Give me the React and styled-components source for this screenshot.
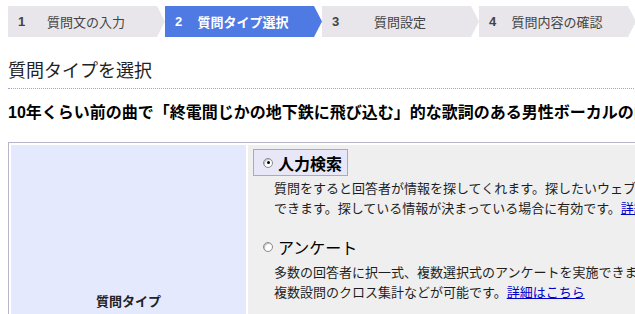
import React from 'react';
import styled, { createGlobalStyle } from 'styled-components';

const GlobalStyle = createGlobalStyle`
  html, body {
    margin: 0;
    padding: 0;
    background: #ffffff;
    overflow: hidden;
  }
  body {
    font-family: "Liberation Sans", "Noto Sans CJK JP", sans-serif;
    color: #222222;
  }
`;

const Page = styled.div`
  width: 1000px;
  padding: 6px 8px 0;
`;

const Steps = styled.ol`
  list-style: none;
  margin: 0;
  padding: 0;
  display: flex;
`;

const Step = styled.li`
  width: 157px;
  height: 31px;
  box-sizing: border-box;
  padding: 0 19px 0 10px;
  display: flex;
  align-items: center;
  font-size: 13px;
  background: ${({ active }) => (active ? '#4f79e3' : '#e8e6ea')};
  color: ${({ active }) => (active ? '#ffffff' : '#444444')};
  clip-path: polygon(0 0, 149px 0, 100% 50%, 149px 100%, 0 100%);
`;

const StepNum = styled.span`
  width: 8px;
  font-weight: bold;
`;

const StepLabel = styled.span`
  flex: 1;
  text-align: center;
  font-weight: ${({ active }) => (active ? 'bold' : 'normal')};
  white-space: nowrap;
`;

const Heading = styled.h2`
  margin: 22px 0 0;
  padding-bottom: 5px;
  font-size: 18px;
  line-height: 24px;
  font-weight: normal;
  color: #222222;
  border-bottom: 1px dotted #a4a4d8;
`;

const Question = styled.h3`
  margin: 13px 0 0;
  font-size: 16px;
  line-height: 22px;
  font-weight: bold;
  color: #000000;
  white-space: nowrap;
`;

const Table = styled.table`
  margin-top: 18px;
  border: 1px solid #b8b4cc;
  border-spacing: 2px;
  width: 1000px;
`;

const HeadCell = styled.th`
  width: 235px;
  height: 310px;
  padding: 0;
  background: #e5e9fd;
  font-size: 13px;
  font-weight: bold;
  color: #222222;
  text-align: center;
  vertical-align: middle;
`;

const BodyCell = styled.td`
  padding: 4px 5px;
  background: #efefef;
  vertical-align: top;
`;

const Option = styled.div`
  margin-bottom: 14px;
`;

const OptionLabel = styled.label`
  display: inline-flex;
  align-items: center;
  height: 27px;
  box-sizing: border-box;
  padding: 0 5px 0 9px;
  border: 1px solid ${({ checked }) => (checked ? '#a8a8cc' : 'transparent')};
  background: ${({ checked }) => (checked ? '#e7e7f8' : 'transparent')};
  font-size: 16px;
  font-weight: ${({ checked }) => (checked ? 'bold' : 'normal')};
  color: #000000;
`;

const Radio = styled.span`
  position: relative;
  width: 10px;
  height: 10px;
  box-sizing: border-box;
  margin-right: 5px;
  border-radius: 50%;
  border: 1px solid #8a8a8a;
  background: #ffffff;
  box-shadow: inset 1px 1px 1px #bdbdbd;

  &::after {
    content: '';
    position: absolute;
    left: 2.5px;
    top: 2.5px;
    width: 3px;
    height: 3px;
    border-radius: 50%;
    background: ${({ checked }) => (checked ? '#000000' : 'transparent')};
  }
`;

const Desc = styled.p`
  margin: 3px 0 0 21px;
  font-size: 13px;
  line-height: 20px;
  color: #1e1e1e;
  white-space: nowrap;
`;

const More = styled.a`
  color: #0000cc;
  text-decoration: underline;
`;

const steps = [
  { num: '1', label: '質問文の入力' },
  { num: '2', label: '質問タイプ選択', active: true },
  { num: '3', label: '質問設定' },
  { num: '4', label: '質問内容の確認' },
];

const options = [
  {
    label: '人力検索',
    checked: true,
    lines: [
      '質問をすると回答者が情報を探してくれます。探したいウェブサイトや商品、お店などの情報を得ることが',
      'できます。探している情報が決まっている場合に有効です。',
    ],
  },
  {
    label: 'アンケート',
    lines: [
      '多数の回答者に択一式、複数選択式のアンケートを実施できます。択一式、複数選択式の',
      '複数設問のクロス集計などが可能です。',
    ],
  },
];

export default function App() {
  return (
    <>
      <GlobalStyle />
      <Page>
        <Steps>
          {steps.map((s) => (
            <Step key={s.num} active={s.active}>
              <StepNum>{s.num}</StepNum>
              <StepLabel active={s.active}>{s.label}</StepLabel>
            </Step>
          ))}
        </Steps>

        <Heading>質問タイプを選択</Heading>
        <Question>10年くらい前の曲で「終電間じかの地下鉄に飛び込む」的な歌詞のある男性ボーカルの曲を教えてください。</Question>

        <Table>
          <tbody>
            <tr>
              <HeadCell>質問タイプ</HeadCell>
              <BodyCell>
                {options.map((o) => (
                  <Option key={o.label}>
                    <OptionLabel checked={o.checked}>
                      <Radio checked={o.checked} />
                      {o.label}
                    </OptionLabel>
                    <Desc>
                      {o.lines[0]}
                      <br />
                      {o.lines[1]}
                      <More href="#">詳細はこちら</More>
                    </Desc>
                  </Option>
                ))}
              </BodyCell>
            </tr>
          </tbody>
        </Table>
      </Page>
    </>
  );
}
